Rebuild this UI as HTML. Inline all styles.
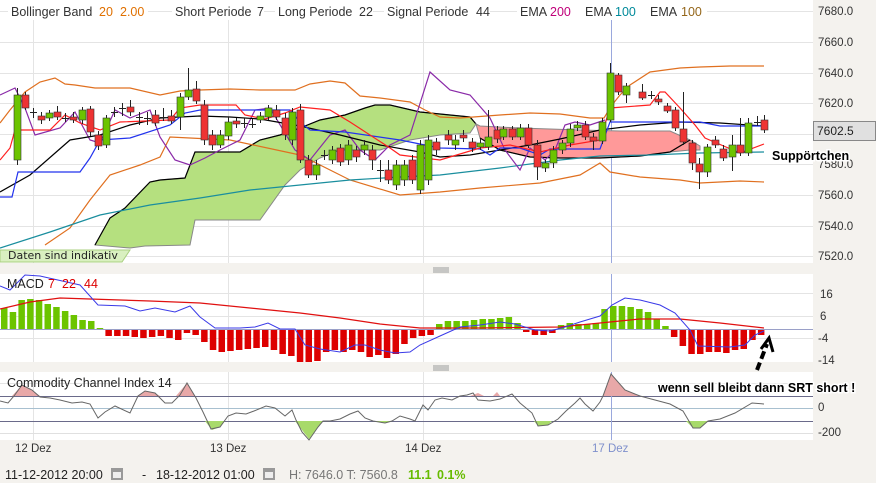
<!DOCTYPE html>
<html><head><meta charset="utf-8"><style>
html,body{margin:0;padding:0;background:#f4f2ee;}
svg{display:block;font-family:"Liberation Sans",sans-serif;}
</style></head><body>
<svg id="s" width="876" height="483" xmlns="http://www.w3.org/2000/svg">
<rect x="0" y="0" width="876" height="483" fill="#f4f2ee"/>
<!-- main panel -->
<rect x="0" y="0" width="813" height="263" fill="#fff"/>
<g stroke="#e4e4e4" stroke-width="1">
<line x1="0" y1="11.5" x2="813" y2="11.5"/><line x1="0" y1="42.5" x2="813" y2="42.5"/><line x1="0" y1="73.5" x2="813" y2="73.5"/><line x1="0" y1="103.5" x2="813" y2="103.5"/><line x1="0" y1="134.5" x2="813" y2="134.5"/><line x1="0" y1="164.5" x2="813" y2="164.5"/><line x1="0" y1="195.5" x2="813" y2="195.5"/><line x1="0" y1="226.5" x2="813" y2="226.5"/><line x1="0" y1="256.5" x2="813" y2="256.5"/>
<line x1="33.5" y1="20" x2="33.5" y2="263"/><line x1="228.5" y1="20" x2="228.5" y2="263"/><line x1="423.5" y1="20" x2="423.5" y2="263"/>
</g>
<line x1="611.5" y1="20" x2="611.5" y2="263" stroke="#9aa8dd"/>
<!-- legend band -->
<rect x="0" y="3" width="813" height="17" fill="#fff"/>
<line x1="0" y1="11.5" x2="813" y2="11.5" stroke="#e4e4e4"/>
<g font-size="12.5" fill="#333">
<rect x="8" y="3" width="140" height="16" fill="#fff"/><text x="11" y="16">Bollinger Band</text><text x="99" y="16" fill="#e07000">20</text><text x="120" y="16" fill="#e07000">2.00</text>
<rect x="172" y="3" width="92" height="16" fill="#fff"/><text x="175" y="16">Short Periode</text><text x="257" y="16">7</text>
<rect x="275" y="3" width="98" height="16" fill="#fff"/><text x="278" y="16">Long Periode</text><text x="359" y="16">22</text>
<rect x="384" y="3" width="106" height="16" fill="#fff"/><text x="387" y="16">Signal Periode</text><text x="476" y="16">44</text>
<rect x="517" y="3" width="190" height="16" fill="#fff"/>
<text x="520" y="16">EMA</text><text x="550" y="16" fill="#c0007a">200</text>
<text x="585" y="16">EMA</text><text x="615" y="16" fill="#008a9a">100</text>
<text x="650" y="16">EMA</text><text x="681" y="16" fill="#94661a">100</text>
</g>
<!-- clouds -->
<polygon fill="#b5e07f" stroke="#888" stroke-width="1" points="95,245 110,218 125,208 150,182 160,180 185,178 195,152 240,152 260,140 280,135 300,128 320,120 345,115 365,108 375,105 390,105 420,112 450,115 470,117 476,124 470,133 440,135 410,140 380,150 340,150 320,158 300,170 285,185 260,220 195,220 190,245 145,246 130,248"/>
<polyline fill="none" stroke="#000" stroke-width="1.2" points="95,245 110,218 125,208 150,182 160,180 185,178 195,152 240,152 260,140 280,135 300,128 320,120 345,115 365,108 375,105 390,105 420,112 450,115 470,117 476,124"/>
<polygon fill="#f99" stroke="#888" stroke-width="1" points="476,124 480,126 520,128 580,130 620,131 670,131 690,140 700,146 700,150 690,150 670,152 640,156 600,158 560,158 530,157 500,150 480,138"/>
<polyline fill="none" stroke="#000" stroke-width="1.2" points="480,138 500,150 530,157 560,158 600,158 640,156 670,152 690,140"/>
<!-- lines -->
<polyline fill="none" stroke="#e07020" stroke-width="1.2" points="0,123 10,110 25,92 40,82 55,78 65,84 75,85 95,88 130,88 160,95 180,91 200,90 230,89 260,90 295,90 310,84 330,81 345,83 360,96 380,98 410,102 425,110 440,117 460,118 500,115 530,113 560,114 590,118 604,118 612,105 620,95 630,85 650,72 680,68 700,67 730,66 764,66"/>
<polyline fill="none" stroke="#e07020" stroke-width="1.2" points="45,245 70,228 90,200 110,175 140,165 160,157 170,137 230,140 300,155 350,180 400,195 440,192 480,188 540,183 580,175 600,163 610,172 640,177 680,180 700,183 740,181 764,182"/>
<polyline fill="none" stroke="#1a8e9e" stroke-width="1.2" points="0,248 50,232 100,215 150,205 200,198 250,190 300,185 350,180 400,177 440,175 500,168 560,160 600,156 650,155 700,153 764,152"/>
<polyline fill="none" stroke="#8a2aa8" stroke-width="1.2" points="0,95 15,88 25,108 35,135 60,128 75,112 90,140 100,143 115,110 130,118 150,110 160,137 175,160 190,165 205,158 220,150 240,140 255,110 270,108 282,128 295,150 310,160 330,135 345,130 360,150 375,160 390,145 410,135 430,72 450,90 470,95 490,118 505,150 520,170 530,148 545,160 555,150 565,125 575,122 590,125 605,120"/>
<polyline fill="none" stroke="#000" stroke-width="1.2" points="0,192 30,175 70,140 100,135 130,125 160,118 200,116 230,117 260,119 300,126 340,135 380,145 420,152 440,157 470,155 500,150 530,145 560,139 600,130 640,125 680,122 720,123 764,126"/>
<polyline fill="none" stroke="#2233ee" stroke-width="1.2" points="0,197 12,197 18,172 80,172 90,158 100,140 130,138 170,125 185,113 200,110 290,110 300,122 310,130 345,132 400,140 440,148 480,149 490,155 500,148 520,148 540,155 550,149 600,149 610,122 700,122 720,126 764,126"/>
<polyline fill="none" stroke="#ff2020" stroke-width="1.2" points="0,160 10,148 15,130 50,130 65,115 80,123 100,130 120,122 170,120 180,108 200,105 236,105 245,115 265,119 285,113 300,107 330,110 350,122 390,148 400,155 440,160 480,148 510,145 540,152 570,145 600,140 610,108 650,105 660,92 665,92 680,108 695,125 705,138 740,153 764,144"/>
<g id="candles"></g>
<!-- Daten box -->
<path d="M0,250 L130,250 L122,262 L0,262 Z" fill="#d9f0c0" stroke="#a9cf7f"/>
<text x="8" y="259" font-size="11" fill="#222" font-family="DejaVu Sans,sans-serif">Daten sind indikativ</text>
<!-- axis labels main -->
<g font-size="11.5" fill="#333">
<text x="818" y="15">7680.0</text><text x="818" y="46">7660.0</text><text x="818" y="77">7640.0</text><text x="818" y="107">7620.0</text><text x="818" y="168">7580.0</text><text x="818" y="199">7560.0</text><text x="818" y="230">7540.0</text><text x="818" y="260">7520.0</text>
</g>
<rect x="813.5" y="121.5" width="62" height="19" fill="#e0e0e0" stroke="#888"/>
<text x="817" y="135" font-size="12" fill="#222">7602.5</text>
<text x="772" y="160" font-size="12.5" font-weight="bold" fill="#000" stroke="#fff" stroke-width="3" paint-order="stroke">Suppörtchen</text>
<!-- grips -->
<g stroke="#999"><line x1="433" y1="268" x2="449" y2="268"/><line x1="433" y1="270" x2="449" y2="270"/><line x1="433" y1="272" x2="449" y2="272"/>
<line x1="433" y1="366" x2="449" y2="366"/><line x1="433" y1="368" x2="449" y2="368"/><line x1="433" y1="370" x2="449" y2="370"/></g>
<!-- MACD panel -->
<rect x="0" y="274" width="813" height="88" fill="#fff"/>
<g stroke="#e4e4e4"><line x1="0" y1="293.5" x2="813" y2="293.5"/><line x1="0" y1="316.5" x2="813" y2="316.5"/><line x1="0" y1="338.5" x2="813" y2="338.5"/><line x1="33.5" y1="274" x2="33.5" y2="362"/><line x1="228.5" y1="274" x2="228.5" y2="362"/><line x1="423.5" y1="274" x2="423.5" y2="362"/></g>
<line x1="0" y1="329.5" x2="813" y2="329.5" stroke="#9aa0c8"/>
<line x1="611.5" y1="274" x2="611.5" y2="362" stroke="#9aa8dd"/>
<g id="macd"></g>
<polyline fill="none" stroke="#e01010" stroke-width="1.2" points="0,309 30,302 60,298 90,299 150,301 200,303 260,309 300,313 340,318 380,324 420,328 480,328 560,327 600,323 640,319 680,319 720,323 764,328"/>
<polyline fill="none" stroke="#3a3ae8" stroke-width="1" points="0,286 10,290 25,275 40,276 80,285 98,305 125,306 140,311 155,308 175,312 190,306 200,317 215,328 240,328 255,327 268,323 280,329 295,329 305,345 320,349 340,352 355,345 365,345 380,350 395,353 410,352 420,345 440,336 460,327 480,325 500,322 515,324 535,330 550,331 565,327 580,322 600,316 612,305 625,298 640,300 660,305 675,313 690,330 698,346 730,347 745,345 755,335 764,331"/>
<g font-size="12.5" fill="#222"><text x="7" y="288">MACD</text><text x="48" y="288" fill="#d00">7</text><text x="62" y="288" fill="#d00">22</text><text x="84" y="288" fill="#d00">44</text></g>
<g font-size="11.5" fill="#333"><text x="820" y="298">16</text><text x="820" y="320">6</text><text x="818" y="342">-4</text><text x="818" y="364">-14</text></g>
<!-- CCI panel -->
<rect x="0" y="372" width="813" height="68" fill="#fff"/>
<g stroke="#e4e4e4"><line x1="0" y1="383.5" x2="813" y2="383.5"/><line x1="33.5" y1="372" x2="33.5" y2="440"/><line x1="228.5" y1="372" x2="228.5" y2="440"/><line x1="423.5" y1="372" x2="423.5" y2="440"/></g>
<line x1="0" y1="396.5" x2="813" y2="396.5" stroke="#6a6a8a"/>
<line x1="0" y1="408.5" x2="813" y2="408.5" stroke="#a8c0d0"/>
<line x1="0" y1="421.5" x2="813" y2="421.5" stroke="#6a6a8a"/>
<line x1="0" y1="433.5" x2="813" y2="433.5" stroke="#e0e0e0"/>
<line x1="611.5" y1="372" x2="611.5" y2="440" stroke="#9aa8dd"/>
<path d="M12,396 L22,385 L32,390 L40,396 Z M138,396 L145,391 L155,393 L160,396 Z M176,396 L187,383 L195,396 Z M470,396 L478,393 L484,396 Z M493,396 L497,392 L500,396 Z M603,396 L611,374 L625,390 L640,396 Z" fill="#e8a8a8"/>
<path d="M205,421 L212,430 L220,427 L225,421 Z M295,421 L309,439 L323,421 Z M373,421 L385,423 L392,421 Z M534,421 L538,426 L548,425 L552,421 Z M686,421 L693,428 L700,428 L708,421 Z" fill="#a8da6a"/>
<polyline fill="none" stroke="#666" stroke-width="1" points="0,401 8,403 14,396 22,385 32,390 40,397 50,398 60,400 72,403 82,402 90,404 98,418 105,412 115,406 130,413 138,396 145,391 155,393 165,403 172,403 180,395 187,383 196,398 203,412 211,429 220,427 228,416 236,413 246,414 254,411 266,406 275,408 285,416 292,410 296,420 302,432 309,440 318,427 323,421 330,421 340,419 350,414 358,411 365,418 373,421 385,423 392,421 400,416 410,419 415,421 423,405 428,410 435,400 442,398 452,400 460,396 467,395 473,393 478,400 490,401 500,399 512,394 520,403 526,408 532,413 538,426 548,425 558,419 566,411 575,403 580,398 585,404 593,411 600,402 603,396 611,374 625,390 640,396 655,400 670,404 683,411 693,428 700,428 708,421 720,419 735,413 752,403 764,404"/>
<text x="7" y="387" font-size="12.5" fill="#222">Commodity Channel Index  14</text>
<g font-size="11.5" fill="#333"><text x="818" y="411">0</text><text x="818" y="436">-200</text></g>
<text x="658" y="392" font-size="12.5" font-weight="bold" fill="#000" stroke="#fff" stroke-width="3" paint-order="stroke">wenn sell bleibt dann SRT short !</text>
<!-- arrow -->
<line x1="757" y1="370" x2="767" y2="344" stroke="#000" stroke-width="4" stroke-dasharray="8,4"/>
<path d="M761,349 L769,338 L773,352" fill="none" stroke="#000" stroke-width="3"/>
<!-- date axis -->
<g font-size="11.5" fill="#333"><text x="15" y="452">12 Dez</text><text x="210" y="452">13 Dez</text><text x="405" y="452">14 Dez</text><text x="592" y="452" fill="#7f90cc">17 Dez</text></g>
<!-- bottom bar -->
<g font-size="12.5" fill="#222">
<text x="5" y="479">11-12-2012 20:00</text>
<rect x="111" y="468" width="12" height="12" fill="#999"/><rect x="113" y="472" width="8" height="6" fill="#eee"/>
<text x="142" y="479">-</text>
<text x="156" y="479">18-12-2012 01:00</text>
<rect x="263" y="468" width="12" height="12" fill="#999"/><rect x="265" y="472" width="8" height="6" fill="#eee"/>
<text x="289" y="479" fill="#777">H: 7646.0  T: 7560.8</text>
<text x="408" y="479" fill="#66bb00" font-weight="bold">11.1</text><text x="437" y="479" fill="#66bb00" font-weight="bold">0.1%</text>
</g>
</svg>
<script>
var NS="http://www.w3.org/2000/svg";
function el(p,t,a){var e=document.createElementNS(NS,t);for(var k in a)e.setAttribute(k,a[k]);p.appendChild(e);return e;}
var C=[[17,'G',95,160,88,165],[25,'R',95,108,92,110],[33,'X',112,112,108,118],[41,'R',116,120,112,124],[49,'G',113,118,110,121],[57,'R',112,117,106,120],[65,'X',118,118,113,122],[73,'R',117,120,112,123],[82,'G',110,120,107,124],[90,'R',109,132,106,136],[98,'R',135,146,131,150],[106,'G',118,145,115,148],[114,'X',112,112,107,117],[122,'X',108,108,103,116],[130,'R',107,112,100,116],[139,'X',117,117,112,125],[147,'X',118,118,112,125],[155,'R',115,123,110,126],[163,'X',117,117,108,121],[171,'R',116,121,110,124],[180,'G',97,117,93,130],[188,'G',90,97,68,100],[196,'R',89,101,81,104],[204,'R',105,140,100,145],[212,'R',135,145,130,150],[220,'G',135,145,130,148],[228,'G',122,136,117,140],[236,'R',121,124,118,128],[244,'X',123,123,118,128],[252,'X',124,124,119,128],[260,'G',116,120,112,123],[268,'G',108,117,105,120],[276,'R',110,117,105,120],[285,'R',118,135,113,140],[292,'G',112,140,108,145],[300,'R',110,160,104,163],[308,'R',160,175,155,178],[316,'G',165,175,160,180],[324,'X',155,155,150,160],[332,'G',150,160,146,164],[340,'R',148,162,144,166],[348,'G',145,160,140,165],[356,'R',150,157,146,162],[364,'G',145,150,140,155],[372,'R',150,160,145,170],[380,'X',170,170,160,182],[388,'R',170,180,160,184],[396,'G',165,185,160,190],[404,'G',165,180,160,186],[412,'R',160,180,155,184],[420,'G',145,190,140,194],[428,'G',140,180,135,185],[436,'R',142,150,138,155],[448,'R',135,140,130,145],[455,'G',140,145,135,150],[463,'R',135,138,130,142],[472,'R',142,148,138,152],[480,'G',143,147,139,150],[488,'G',137,147,110,150],[497,'R',130,139,126,143],[503,'G',129,137,126,140],[512,'R',129,137,126,140],[520,'G',128,137,124,140],[528,'R',128,145,124,148],[537,'R',145,167,140,180],[545,'G',163,168,160,172],[553,'G',150,163,146,168],[562,'G',143,150,140,154],[570,'G',129,143,124,147],[577,'G',125,128,121,131],[585,'R',125,137,121,140],[593,'R',137,141,133,150],[602,'G',122,141,118,144],[610,'G',73,120,63,122],[618,'R',75,92,73,95],[626,'G',86,95,83,103],[642,'R',92,98,84,100],[651,'X',95,95,91,99],[658,'R',99,102,95,105],[667,'R',106,111,103,113],[675,'R',110,128,107,131],[683,'R',129,142,92,145],[692,'R',143,163,140,170],[699,'R',164,172,158,189],[707,'G',147,172,144,177],[715,'R',140,145,136,148],[723,'R',149,158,145,161],[732,'G',145,157,135,171],[740,'R',145,153,118,156],[748,'G',123,153,118,156],[757,'X',122,122,116,126],[764,'R',120,130,115,133]];
var g=document.getElementById('candles');
C.forEach(function(c){var x=c[0];el(g,'line',{x1:x+.5,y1:c[4],x2:x+.5,y2:c[5],stroke:'#222'});
if(c[1]=='X'){el(g,'line',{x1:x-3,y1:c[2]+.5,x2:x+4,y2:c[2]+.5,stroke:'#222'});return;}
el(g,'rect',{x:x-3,y:Math.min(c[2],c[3]),width:7,height:Math.max(2,Math.abs(c[3]-c[2])),fill:c[1]=='G'?'#6cc400':'#ee3333',stroke:'#333','stroke-width':.6});});
var H=[21,17,29,30,29,25,22,18,14,9,8,1,-6,-6,-6,-7,-8,-7,-6,-8,-10,-3,-5,-12,-20,-22,-21,-20,-19,-18,-17,-20,-24,-26,-32,-32,-31,-22,-20,-22,-20,-22,-27,-25,-28,-24,-14,-8,-6,-5,5,8,8,8,9,10,10,11,12,6,-2,-5,-5,-3,4,6,5,5,6,20,23,23,22,20,17,10,3,-7,-16,-24,-24,-22,-22,-23,-20,-19,-10,-5];
var m=document.getElementById('macd');
H.forEach(function(h,i){var x=1+i*8.7;if(x>770)return;el(m,'rect',{x:x,y:h>0?329-h:330,width:6.5,height:Math.abs(h),fill:h>0?'#6cc400':'#dd0000'});});
</script>
</body></html>
